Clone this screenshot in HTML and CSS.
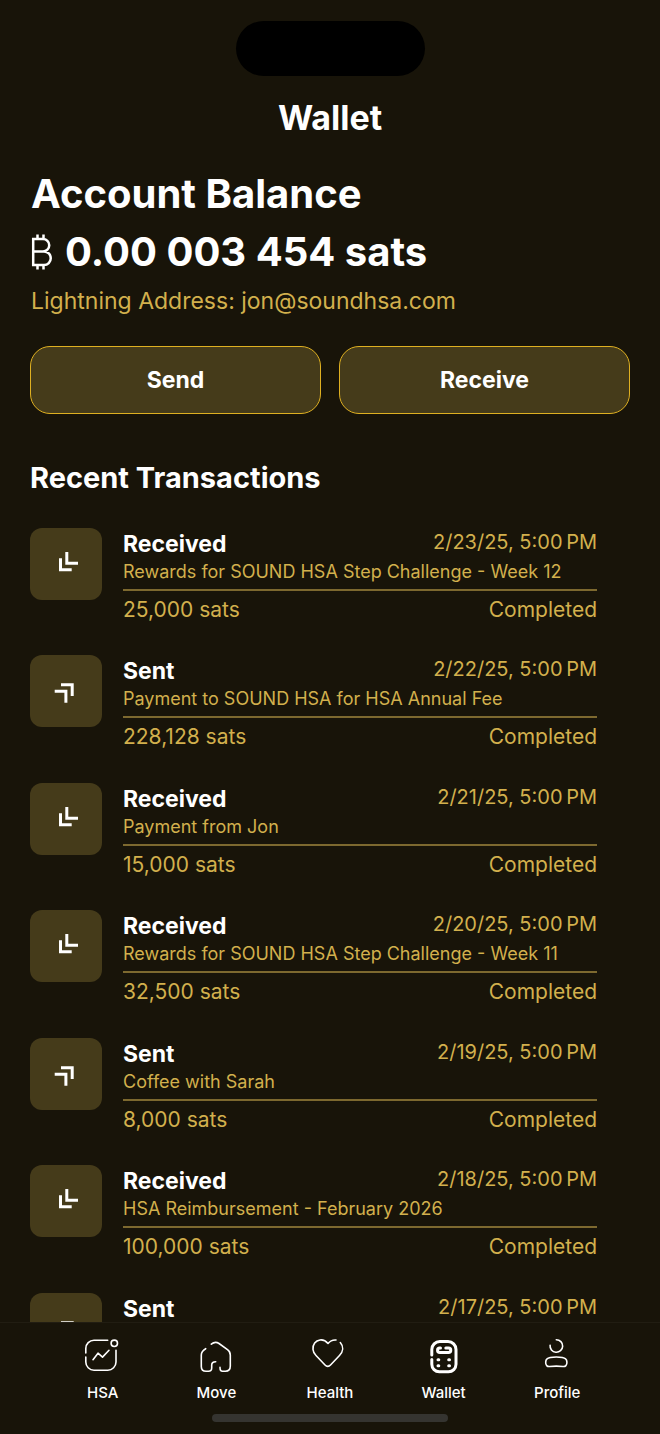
FILE: index.html
```html
<!DOCTYPE html>
<html lang="en">
<head>
<meta charset="utf-8">
<meta name="viewport" content="width=device-width, initial-scale=1">
<title>Wallet</title>
<link rel="stylesheet" href="styles.css">
</head>
<body>
<svg class="sprite" aria-hidden="true">
  <symbol id="in" viewBox="0 0 72 72"><path d="M36.8 24v11.2H48M30.5 30.3v11.5h11.2"/></symbol>
  <symbol id="out" viewBox="0 0 72 72"><path d="M24.7 36.2h11.2v11.5M31 29.7h11.2V41"/></symbol>
</svg>
<div class="app">
  <header class="top">
    <div class="island"></div>
    <h1 class="title">Wallet</h1>
  </header>
  <main class="content">
    <section class="balance">
      <h2 class="heading">Account Balance</h2>
      <p class="amount"><svg class="btc" viewBox="0 0 22 36" role="img" aria-label="Bitcoin"><path d="M2.200 4v28M1 5h11a6.200 6.200 0 0 1 0 12.500H2M12 17.500h1a6.700 6.700 0 0 1 0 13.500H1M6.500 .5V5M12.500 .5V5M6.500 31v4.500M12.500 31v4.500"/></svg>0.00 003 454 sats</p>
      <p class="address">Lightning Address: jon@soundhsa.com</p>
    </section>
    <div class="actions">
      <button class="action" type="button">Send</button>
      <button class="action" type="button">Receive</button>
    </div>
    <h2 class="subheading">Recent Transactions</h2>
    <ul class="list">
      <li class="tx">
        <span class="badge"><svg class="arrow"><use href="#in"/></svg></span>
        <div class="info">
          <div class="line"><h3 class="kind">Received</h3><time class="date">2/23/25, 5:00&#8239;PM</time></div>
          <p class="memo">Rewards for SOUND HSA Step Challenge - Week 12</p>
          <div class="line result"><span>25,000 sats</span><span>Completed</span></div>
        </div>
      </li>
      <li class="tx">
        <span class="badge"><svg class="arrow"><use href="#out"/></svg></span>
        <div class="info">
          <div class="line"><h3 class="kind">Sent</h3><time class="date">2/22/25, 5:00&#8239;PM</time></div>
          <p class="memo">Payment to SOUND HSA for HSA Annual Fee</p>
          <div class="line result"><span>228,128 sats</span><span>Completed</span></div>
        </div>
      </li>
      <li class="tx">
        <span class="badge"><svg class="arrow"><use href="#in"/></svg></span>
        <div class="info">
          <div class="line"><h3 class="kind">Received</h3><time class="date">2/21/25, 5:00&#8239;PM</time></div>
          <p class="memo">Payment from Jon</p>
          <div class="line result"><span>15,000 sats</span><span>Completed</span></div>
        </div>
      </li>
      <li class="tx">
        <span class="badge"><svg class="arrow"><use href="#in"/></svg></span>
        <div class="info">
          <div class="line"><h3 class="kind">Received</h3><time class="date">2/20/25, 5:00&#8239;PM</time></div>
          <p class="memo">Rewards for SOUND HSA Step Challenge - Week 11</p>
          <div class="line result"><span>32,500 sats</span><span>Completed</span></div>
        </div>
      </li>
      <li class="tx">
        <span class="badge"><svg class="arrow"><use href="#out"/></svg></span>
        <div class="info">
          <div class="line"><h3 class="kind">Sent</h3><time class="date">2/19/25, 5:00&#8239;PM</time></div>
          <p class="memo">Coffee with Sarah</p>
          <div class="line result"><span>8,000 sats</span><span>Completed</span></div>
        </div>
      </li>
      <li class="tx">
        <span class="badge"><svg class="arrow"><use href="#in"/></svg></span>
        <div class="info">
          <div class="line"><h3 class="kind">Received</h3><time class="date">2/18/25, 5:00&#8239;PM</time></div>
          <p class="memo">HSA Reimbursement - February 2026</p>
          <div class="line result"><span>100,000 sats</span><span>Completed</span></div>
        </div>
      </li>
      <li class="tx">
        <span class="badge"><svg class="arrow"><use href="#out"/></svg></span>
        <div class="info">
          <div class="line"><h3 class="kind">Sent</h3><time class="date">2/17/25, 5:00&#8239;PM</time></div>
        </div>
      </li>
    </ul>
  </main>
  <footer class="bottom">
    <nav class="tabs">
      <a class="tab" href="#hsa"><svg class="icon" viewBox="1 0 40 40"><path d="M25.700 5.200H12a8.200 8.200 0 0 0-8.200 8.200V18M3.800 22v5a8.200 8.200 0 0 0 8.200 8.200h13.800a8.200 8.200 0 0 0 8.200-8.200V15.300M11 24.700l5-6.500 4.500 3.900 6.500-6.800"/><circle cx="32.300" cy="8.300" r="3.200"/></svg>HSA</a>
      <a class="tab" href="#move"><svg class="icon" viewBox="1 0 40 40"><path d="M10.700 13.700C7.600 15.500 6.300 17.500 6.300 20v11.500c0 3.200 2 4.800 4.800 4.800h2.300c2.300 0 3.300-1.200 3.300-3.300v-3c0-2.200 1.500-3.300 4-3.300M16.300 9.200c2.700-2.300 5-2.500 7.700-.7l8.500 6.100c2 1.400 2.800 2.900 2.800 5.400v11c0 3.300-1.800 5.200-4.900 5.200h-2.900c-1.700 0-2.500-1-2.500-3.800"/></svg>Move</a>
      <a class="tab" href="#health"><svg class="icon" viewBox="1 0 40 40"><path d="M27 5c-3.200-.3-5.600.6-8 3.500C16.500 5.500 14 4.600 11 5 6.500 5.600 3.600 9.500 4 14.500c.2 2.300 1.300 4.300 3 6l9 9.500c1.700 1.800 3.800 1.800 5.500 0l9-9.500c3.800-4 4.300-9 .8-13"/></svg>Health</a>
      <a class="tab current" href="#wallet" aria-current="page"><svg class="icon bold" viewBox="1 0 40 40"><path d="M8.800 20v-5.500a8 8 0 0 1 8-8H25a8 8 0 0 1 8 8v14.800a7.500 7.500 0 0 1-7.500 7.500h-9.200a7.500 7.500 0 0 1-7.500-7.500V24.500M17.500 13h-.7a2.200 2.200 0 0 0 0 4.500h8.700a2.200 2.200 0 0 0 0-4.500h-2.700M15 24.700h.8M25.700 24.700h.8M15 30.700h.8M25.700 30.700h.8"/></svg>Wallet</a>
      <a class="tab" href="#profile"><svg class="icon" viewBox="1 0 40 40"><path d="M20.300 4.700a6.300 6.300 0 1 1-6.200 5.500M20.300 22c4.500 0 8 .6 9.300 1.800 1.600 1.400 1.800 5.200.3 6.800-.7.800-1.800 1-3 .9-4.500-.5-8.700-.5-13.200 0-1.300.1-2.300-.1-3-.9-1.500-1.600-1.300-5.400.3-6.800C12.300 22.600 15.800 22 20.300 22z"/></svg>Profile</a>
    </nav>
    <div class="home"></div>
  </footer>
</div>
</body>
</html>
```
FILE: styles.css
```css
* { box-sizing: border-box; margin: 0; padding: 0; }
body { background: #181409; color: #fff; font-family: Inter, "Liberation Sans", sans-serif; }
.sprite { display: none; }
.app { display: flex; flex-direction: column; height: 100vh; }
.top { display: flex; flex-direction: column; align-items: center; gap: 20px; padding-top: 21px; }
.island { width: 189px; height: 55px; border-radius: 28px; background: #000; }
.title { font-size: 34px; line-height: 44px; font-weight: 700; }
.content { flex: 1; min-height: 0; overflow: hidden; padding: 28px 30px 0; }
.balance { padding-left: 1px; }
.heading, .amount { font-size: 40px; line-height: 52px; font-weight: 700; }
.amount { display: flex; align-items: center; gap: 12px; margin-top: 6px; }
.btc { width: 22px; height: 36px; fill: none; stroke: #fff; stroke-width: 2.5; }
.address { margin-top: 7px; font-size: 23px; line-height: 32px; color: #d2b04d; }
.actions { display: grid; grid-template-columns: 1fr 1fr; gap: 18px; margin-top: 29px; }
.action { height: 68px; border: 1px solid #dfb021; border-radius: 20px; background: #453b1a; color: #fff; font: 700 23px Inter, "Liberation Sans", sans-serif; }
.subheading { margin-top: 44px; font-size: 29px; line-height: 40px; font-weight: 700; }
.list { display: grid; grid-auto-rows: 127px 128px; margin-top: 30px; list-style: none; }
.tx { display: flex; gap: 21px; padding-right: 33px; }
.badge { flex: none; width: 72px; height: 72px; border-radius: 12px; background: #453b1a; }
.arrow { display: block; width: 72px; height: 72px; fill: none; stroke: #fff; stroke-width: 3; }
.info { flex: 1; }
.line { display: flex; justify-content: space-between; }
.kind { padding: 4px 0 2px; font-size: 23px; line-height: 24px; font-weight: 700; }
.date { font-size: 20px; line-height: 28px; color: #d2b04d; }
.memo { height: 33px; padding-top: 2px; border-bottom: 2px solid #7d692f; font-size: 18px; line-height: 24px; color: #d2b04d; }
.result { padding-top: 4px; font-size: 21px; line-height: 30px; color: #d2b04d; }
.bottom { padding: 12px 46px 12px; border-top: 1px solid #211d12; background: #181409; }
.tabs { display: grid; grid-template-columns: repeat(5, 1fr); }
.tab { display: flex; flex-direction: column; align-items: center; gap: 8px; color: #fff; font-size: 15px; line-height: 20px; font-weight: 500; text-decoration: none; }
.icon { width: 40px; height: 40px; fill: none; stroke: #fff; stroke-width: 1.6; stroke-linecap: round; stroke-linejoin: round; }
.bold { stroke-width: 3; }
.home { width: 236px; height: 8px; margin: 11px auto 0; border-radius: 4px; background: #353430; }
```
